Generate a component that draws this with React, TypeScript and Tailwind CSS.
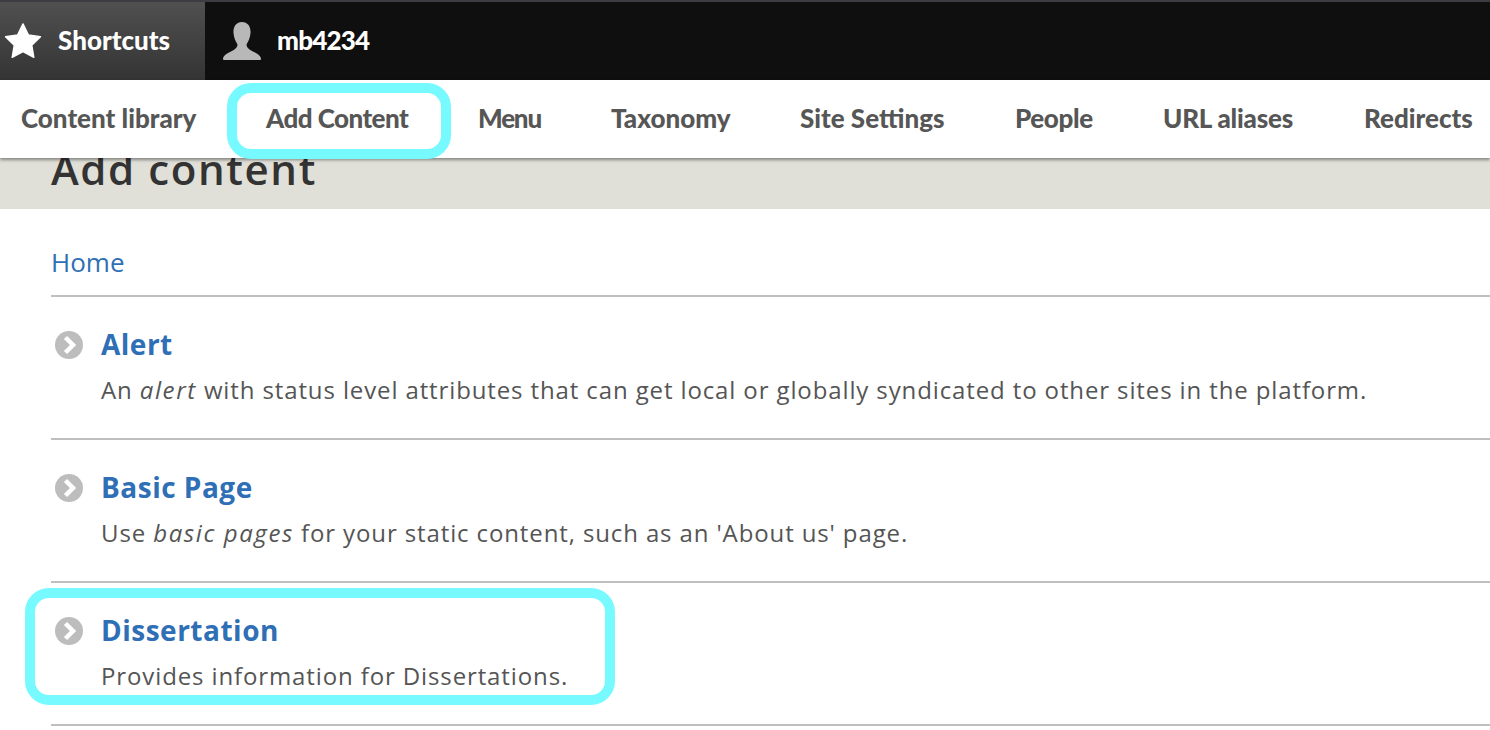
import React from "react";

const nav = [
  ["Content library", "w-[196px] pl-[21px]"],
  ["Add Content", "w-[212px] pl-[70px] tracking-[-0.55px]"],
  ["Menu", "w-[133px] pl-[70px] tracking-[-1.2px]"],
  ["Taxonomy", "w-[189px] pl-[70px]"],
  ["Site Settings", "w-[215px] pl-[70px]"],
  ["People", "w-[148px] pl-[70px] tracking-[-0.4px]"],
  ["URL aliases", "w-[201px] pl-[70px] tracking-[-0.2px]"],
  ["Redirects", "w-[196px] pl-[70px]"],
];

function Bullet() {
  return (
    <svg viewBox="0 0 28 28" className="absolute left-[-46px] top-[6px] w-[28px] h-[28px]">
      <circle cx="14" cy="14" r="14" fill="#bdbdbd" />
      <path d="M10.5 6.5 L18 14 L10.5 21.5" fill="none" stroke="#fff" strokeWidth="4.5" />
    </svg>
  );
}

function Row({ title, children }: { title: string; children: React.ReactNode }) {
  return (
    <div className="h-[143px] border-b-2 border-[#bfbfbf] pl-[50px] pt-[28px]">
      <div className="relative">
        <Bullet />
        <div className="text-[28px] leading-[38px] font-bold text-[#2f6fb5] tracking-[0.5px]">{title}</div>
        <div className="text-[24px] leading-[38px] mt-[8px] text-[#555] tracking-[0.88px] whitespace-nowrap">{children}</div>
      </div>
    </div>
  );
}

export default function App() {
  return (
    <div className="relative w-[1490px] h-[730px] overflow-hidden bg-white font-['Open_Sans',sans-serif]">
      <div className="h-[80px] bg-[#0f0f0f] border-t-2 border-[#3c3c44] flex text-white font-['Lato',sans-serif] font-black text-[26px]">
        <div className="w-[205px] bg-gradient-to-b from-[#505050] to-[#343434] flex items-center pl-[4px] gap-[15px]">
          <svg viewBox="0 0 40 40" className="w-[38px] h-[38px] shrink-0">
            <path d="M20 2 L25.6 13.6 L38.4 15.4 L29.2 24.4 L31.4 37.2 L20 31.2 L8.6 37.2 L10.8 24.4 L1.6 15.4 L14.4 13.6 Z" fill="#fff" stroke="#fff" strokeWidth="1.5" strokeLinejoin="round" />
          </svg>
          <span className="leading-none mb-[3px] ml-[1px]">Shortcuts</span>
        </div>
        <div className="flex items-center pl-[17px] gap-[15px]">
          <svg viewBox="0 0 40 40" className="w-[40px] h-[40px] shrink-0">
            <path d="M20 1 C26 1 29 6 28.5 12 C28.2 17 26 21 24.5 23.5 C24.5 27 28 29 32 31 C36 33 39 35 39 38 C39 39 38 39 37 39 L3 39 C2 39 1 39 1 38 C1 35 4 33 8 31 C12 29 15.5 27 15.5 23.5 C14 21 11.8 17 11.5 12 C11 6 14 1 20 1 Z" fill="#b8b8b8" />
          </svg>
          <span className="leading-none mb-[3px] tracking-[-0.8px]">mb4234</span>
        </div>
      </div>
      <div className="relative z-10 h-[78px] bg-white shadow-[0_2px_3px_rgba(0,0,0,0.4)] flex items-center font-['Lato',sans-serif] font-black text-[26px] text-[#565656] whitespace-nowrap pb-[2px]">
        {nav.map(([t, c]) => (
          <div key={t} className={c + " shrink-0"}>{t}</div>
        ))}
      </div>
      <div className="h-[51px] bg-[#e0e0d8] pl-[51px] overflow-hidden relative">
        <div className="absolute top-[-15px] left-[51px] text-[42px] leading-[52px] font-semibold text-[#333] tracking-[1.6px]">Add content</div>
      </div>
      <div className="ml-[51px]">
        <div className="h-[88px] border-b-2 border-[#bfbfbf] pt-[35px] text-[26px] leading-[36px] text-[#2f6fb5]">Home</div>
        <Row title="Alert">An <em className="tracking-[1.6px]">alert</em> with status level attributes that can get local or globally syndicated to other sites in the platform.</Row>
        <Row title="Basic Page">Use <em className="tracking-[1.6px]">basic pages</em> for your static content, such as an 'About us' page.</Row>
        <Row title="Dissertation">Provides information for Dissertations.</Row>
      </div>
      <div className="absolute left-[227px] top-[83px] w-[224px] h-[76px] border-[10px] border-[#76faff] rounded-[24px] z-20" />
      <div className="absolute left-[25px] top-[588px] w-[590px] h-[117px] border-[10px] border-[#76faff] rounded-[24px] z-20" />
    </div>
  );
}
